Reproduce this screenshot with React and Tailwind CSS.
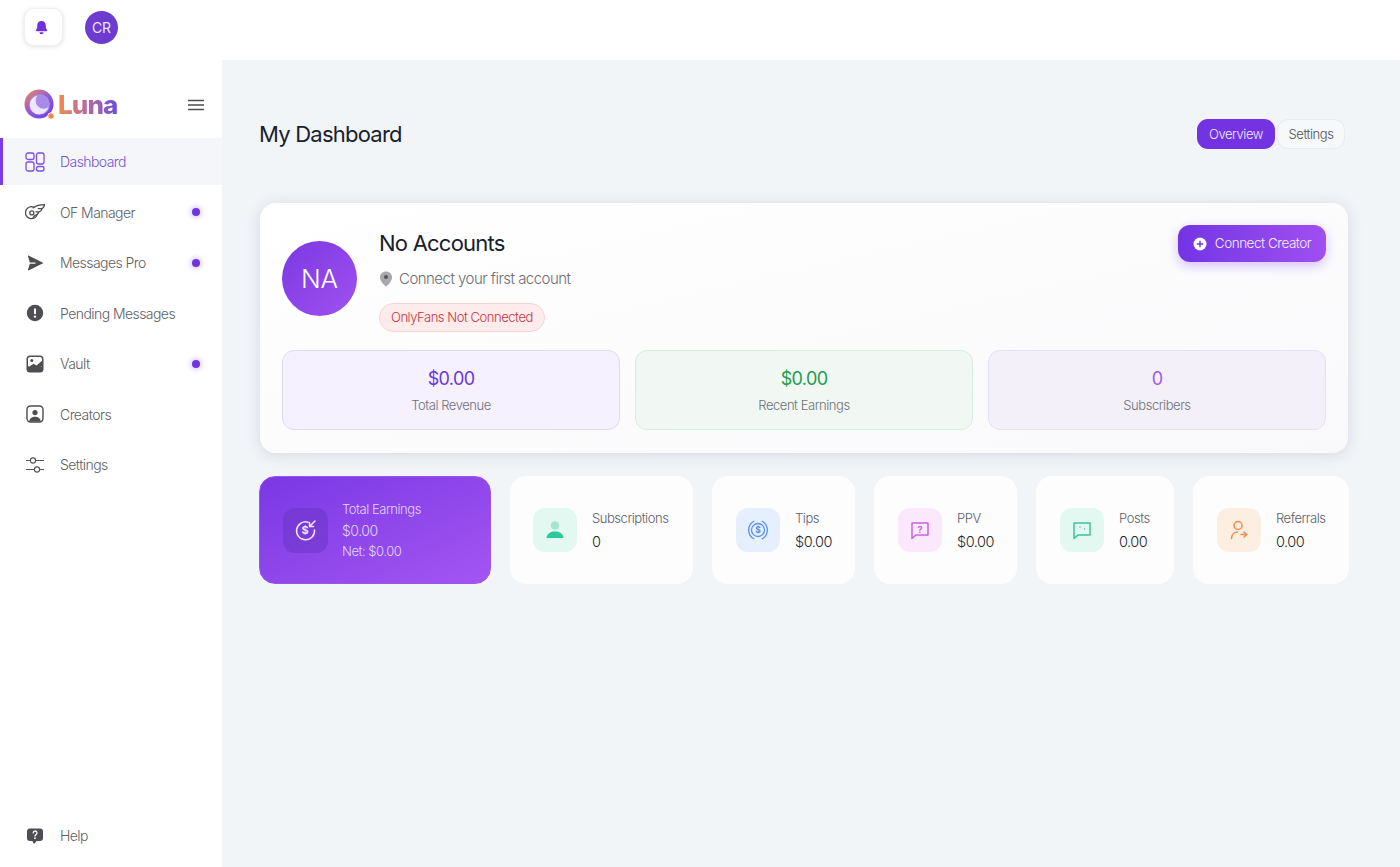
import React from 'react';

const Logo = () => (
  <svg width="32" height="32" viewBox="0 0 32 32" className="shrink-0">
    <defs>
      <linearGradient id="logoRing" x1="0" y1="0" x2="0.8" y2="1">
        <stop offset="0" stopColor="#f4914a" />
        <stop offset="0.5" stopColor="#9a5cd0" />
        <stop offset="1" stopColor="#6a3fe6" />
      </linearGradient>
    </defs>
    <circle cx="15" cy="15" r="14.5" fill="url(#logoRing)" />
    <circle cx="15.5" cy="15.500" r="10.5" fill="#a88ae8" />
    <path d="M13.500 6.500a9.500 9.500 0 1 0 11 11.500a8 8 0 0 1-11-11.500z" fill="#ece7fc" />
    <circle cx="27" cy="27" r="3.2" fill="#f0894a" stroke="#fff" strokeWidth="0.8" />
  </svg>
);

const DashboardIcon = () => (
  <svg width="20" height="20" viewBox="0 0 20 20" fill="none" stroke="#7c4fdc" strokeWidth="1.3">
    <rect x="1" y="1" width="8" height="6.5" rx="2" />
    <rect x="1" y="10" width="8" height="9" rx="2" />
    <rect x="11.5" y="1" width="7.5" height="11" rx="2" />
    <rect x="11.5" y="14.5" width="7.5" height="4.5" rx="2" />
  </svg>
);

const WingIcon = () => (
  <svg width="22" height="20" viewBox="0 0 22 20" fill="none" stroke="#4d4d52" strokeWidth="1.4" strokeLinecap="round" strokeLinejoin="round">
    <path d="M9.500 4.600a6.600 6.600 0 1 0 4 8" />
    <circle cx="7.500" cy="11" r="2.200" />
    <path d="M9 5.500C12 3.200 17 2 21.500 2c-.3 1.900-1.300 3.500-3 4.200H14.500M18.800 6.200c-.5 2-1.700 3.300-3.600 3.600h-3.200M15.400 9.800c-.8 2.200-2.300 3.500-4.400 3.800l-2.300 2.800" />
  </svg>
);

const SendIcon = () => (
  <svg width="20" height="20" viewBox="0 0 20 20" fill="#4d4d52">
    <path d="M3.500 2.500 L18.500 10 L3.500 17.500 Q2.800 17.700 3 16.800 L4.800 10.700 H10.500 V9.600 H4.800 L3 3.200 Q2.800 2.300 3.500 2.500 Z" />
  </svg>
);

const AlertIcon = () => (
  <svg width="20" height="20" viewBox="0 0 20 20">
    <circle cx="10" cy="10" r="8.200" fill="#4d4d52" />
    <rect x="9" y="5.200" width="2" height="6" rx="1" fill="#fff" />
    <circle cx="10" cy="13.600" r="1.200" fill="#fff" />
  </svg>
);

const VaultIcon = () => (
  <svg width="20" height="20" viewBox="0 0 20 20">
    <rect x="1.500" y="1.500" width="17" height="17" rx="3.500" fill="#4d4d52" />
    <rect x="3" y="3" width="14" height="10" rx="2" fill="#fff" />
    <path d="M3 13.500 L8.500 9.800 L11.500 11.500 L17 6.800 V12 L11 15.500 H3 Z" fill="#4d4d52" />
    <circle cx="6.800" cy="6.600" r="1.500" fill="#4d4d52" />
  </svg>
);

const CreatorsIcon = () => (
  <svg width="20" height="20" viewBox="0 0 20 20" fill="none">
    <rect x="2" y="2" width="16" height="16" rx="3.500" stroke="#4d4d52" strokeWidth="1.400" />
    <circle cx="10" cy="8.600" r="2.600" fill="#4d4d52" />
    <path d="M4.200 17.500 C4.800 13.800 7.400 12.800 10 12.800 C12.600 12.800 15.200 13.800 15.800 17.500 Z" fill="#4d4d52" />
  </svg>
);

const SlidersIcon = () => (
  <svg width="20" height="20" viewBox="0 0 20 20" fill="none" stroke="#55555a" strokeWidth="1.100">
    <circle cx="8" cy="5.500" r="2.600" />
    <circle cx="12" cy="14.500" r="2.600" />
    <path d="M1 5.500h4.400M10.600 5.500H19M1 14.500h8.400M14.600 14.500H19" />
  </svg>
);

const HelpIcon = () => (
  <svg width="20" height="20" viewBox="0 0 20 20">
    <path d="M5 2.500h10a3 3 0 0 1 3 3v6.500a3 3 0 0 1-3 3h-3.400L9 18l-1.600-3H5a3 3 0 0 1-3-3V5.500a3 3 0 0 1 3-3z" fill="#4d4d52" />
    <path d="M8.200 6.900a1.900 1.900 0 1 1 2.800 1.700c-.7.400-1 .8-1 1.500" fill="none" stroke="#fff" strokeWidth="1.300" strokeLinecap="round" />
    <circle cx="10" cy="12.200" r=".9" fill="#fff" />
  </svg>
);

const navItems = [
  { label: 'OF Manager', icon: WingIcon, dot: true },
  { label: 'Messages Pro', icon: SendIcon, dot: true },
  { label: 'Pending Messages', icon: AlertIcon },
  { label: 'Vault', icon: VaultIcon, dot: true },
  { label: 'Creators', icon: CreatorsIcon },
  { label: 'Settings', icon: SlidersIcon },
];

const NavRow = ({ item }) => {
  const Icon = item.icon;
  return (
    <div className="mb-[3.500px] flex h-[47px] items-center pl-[25px] pr-[22px]">
      <span className="flex w-[20px] justify-center"><Icon /></span>
      <span className="ml-[15px] text-[14px] font-light tracking-[-0.04em] text-[#5f6066]">{item.label}</span>
      {item.dot && <span className="ml-auto h-[8px] w-[8px] rounded-full bg-[#6d35e0] shadow-[0_0_5px_2px_rgba(124,58,237,0.25)]" />}
    </div>
  );
};

const SummaryBox = ({ value, label, valueClass, boxClass }) => (
  <div className={`flex h-[80px] flex-1 flex-col items-center justify-center rounded-[12px] border ${boxClass}`}>
    <div className={`text-[18px] leading-[24px] tracking-[-0.035em] ${valueClass}`}>{value}</div>
    <div className="mt-[5px] text-[13px] leading-[18px] font-light tracking-[-0.035em] text-[#6f7079]">{label}</div>
  </div>
);

const SubsIcon = () => (
  <svg width="24" height="24" viewBox="0 0 24 24">
    <circle cx="12" cy="7.500" r="4.200" fill="#a3e5cf" />
    <path d="M3.500 20 C4 15 8 13.500 12 13.500 C16 13.500 20 15 20.500 20 Z" fill="#2cc79a" />
  </svg>
);

const TipsIcon = () => (
  <svg width="24" height="24" viewBox="0 0 24 24" fill="none" stroke="#5b8fe6" strokeWidth="1.300">
    <path d="M8.300 3A10 10 0 0 0 8.300 21M15.700 3A10 10 0 0 1 15.700 21" />
    <circle cx="12" cy="12" r="6.500" />
    <text x="12" y="15" textAnchor="middle" fontSize="8.500" fontWeight="700" fill="#5b8fe6" stroke="none" fontFamily="Inter, sans-serif">$</text>
  </svg>
);

const PpvIcon = () => (
  <svg width="24" height="24" viewBox="0 0 24 24" fill="none" stroke="#c264dc" strokeWidth="1.500" strokeLinejoin="round">
    <path d="M4 5h16v12H8l-4 3.500z" />
    <text x="12" y="14.500" textAnchor="middle" fontSize="9" fontWeight="700" fill="#c264dc" stroke="none" fontFamily="Inter, sans-serif">?</text>
  </svg>
);

const PostsIcon = () => (
  <svg width="24" height="24" viewBox="0 0 24 24" fill="none" stroke="#3cc39c" strokeWidth="1.500" strokeLinejoin="round">
    <path d="M4 5h16v12H8l-4 3.500z" />
    <circle cx="10" cy="9" r=".7" fill="#3cc39c" stroke="none" />
    <circle cx="14.500" cy="11" r=".7" fill="#3cc39c" stroke="none" />
  </svg>
);

const ReferralIcon = () => (
  <svg width="24" height="24" viewBox="0 0 24 24" fill="none" stroke="#f08c4b" strokeWidth="1.500" strokeLinecap="round">
    <circle cx="11" cy="7.500" r="4" />
    <path d="M4.500 20.500c.2-4 2.800-6.500 6-6.500" />
    <path d="M14 16.500h5.500M17 14l2.700 2.500L17 19" />
  </svg>
);

const EarningsIcon = () => (
  <svg width="24" height="24" viewBox="0 0 24 24" fill="none" stroke="#f0e6ff" strokeWidth="1.500" strokeLinecap="round" strokeLinejoin="round">
    <path d="M14 4.200A9 9 0 1 0 20.500 12" />
    <path d="M21 3l-5.500 5.500M15.500 4.500v4h4" />
    <text x="11" y="16.300" textAnchor="middle" fontSize="11" fontWeight="700" fill="#f0e6ff" stroke="none" fontFamily="Inter, sans-serif">$</text>
  </svg>
);

const statCards = [
  { label: 'Subscriptions', value: '0', icon: SubsIcon, tint: 'bg-[#e2f8f1]', width: 'w-[183px]', pad: 'pl-[23px]' },
  { label: 'Tips', value: '$0.00', icon: TipsIcon, tint: 'bg-[#e5effd]', width: 'w-[143px]', pad: 'pl-[24px]' },
  { label: 'PPV', value: '$0.00', icon: PpvIcon, tint: 'bg-[#fce8fd]', width: 'w-[143px]', pad: 'pl-[24px]' },
  { label: 'Posts', value: '0.00', icon: PostsIcon, tint: 'bg-[#e2f8f1]', width: 'w-[137.500px]', pad: 'pl-[24px]' },
  { label: 'Referrals', value: '0.00', icon: ReferralIcon, tint: 'bg-[#fdeee2]', width: 'w-[156.500px]', pad: 'pl-[24.500px]' },
];

export default function App() {
  return (
    <div className="flex h-screen flex-col overflow-hidden bg-white font-[Inter,sans-serif]">
      <header className="flex h-[60px] shrink-0 items-start bg-white pl-[24px] pt-[8px]">
        <div className="flex h-[38px] w-[39px] items-center justify-center rounded-[10px] border border-[#f0eff3] bg-white pr-[5px] shadow-[0_1px_5px_rgba(0,0,0,0.12)]">
          <svg width="13" height="15" viewBox="0 0 14 15" fill="#6d2fe0">
            <path d="M7 .5c2.900 0 4.600 2 4.600 4.800v2.500l1.400 2.700c.2.500 0 1-.6 1H1.600c-.6 0-.8-.5-.6-1l1.400-2.700V5.300C2.400 2.500 4.100.5 7 .5z" />
            <path d="M4.800 12.500h4.400a2.200 2.200 0 0 1-4.400 0z" />
          </svg>
        </div>
        <div className="ml-[22px] mt-[3px] flex h-[33px] w-[33px] items-center justify-center rounded-full bg-[#6d3bd0] text-[14px] text-[#ede6fb]">CR</div>
      </header>

      <div className="flex min-h-0 flex-1">
        <aside className="flex w-[222px] shrink-0 flex-col bg-white">
          <div className="flex h-[78px] items-center pl-[24px] pr-[17px] pt-[12px]">
            <Logo />
            <span className="ml-[2px] bg-linear-to-r from-[#f18a45] via-[#b866a0] to-[#6a4ed8] bg-clip-text text-[26px] leading-[32px] font-extrabold tracking-[-0.035em] text-transparent">Luna</span>
            <svg width="18" height="12" viewBox="0 0 18 12" className="ml-auto" fill="none" stroke="#4d4d52" strokeWidth="1.300">
              <path d="M1 1.500h16M1 6h16M1 10.500h16" />
            </svg>
          </div>
          <div className="mb-[3.500px] flex h-[47px] items-center border-l-[3px] border-[#7c3aed] bg-[#f5f6fa] pl-[22px]">
            <span className="flex w-[20px] justify-center"><DashboardIcon /></span>
            <span className="ml-[15px] text-[14px] font-light tracking-[-0.04em] text-[#7a52d6]">Dashboard</span>
          </div>
          {navItems.map((item) => (
            <NavRow key={item.label} item={item} />
          ))}
          <div className="mt-auto mb-[8px] flex h-[47px] items-center pl-[25px]">
            <span className="flex w-[20px] justify-center"><HelpIcon /></span>
            <span className="ml-[15px] text-[14px] font-light tracking-[-0.04em] text-[#5f6066]">Help</span>
          </div>
        </aside>

        <main className="flex-1 bg-[#f1f5f8] pl-[37px] pr-[51px]">
          <div className="flex h-[143px] items-start justify-between pt-[59px]">
            <h1 className="text-[22px] leading-[30px] font-normal tracking-[-0.035em] text-[#18202c]">My Dashboard</h1>
            <div className="flex items-start gap-[2px] pr-[4px]">
              <button className="flex h-[30px] w-[78px] items-center justify-center rounded-[11px] bg-[#7333e2] pt-px text-[13px] font-light tracking-[-0.035em] text-[#f2ecff]">Overview</button>
              <button className="flex h-[30px] w-[68px] items-center justify-center rounded-[11px] border border-[#e9ebef] bg-[#f6f8fa] pt-px text-[13px] font-light tracking-[-0.035em] text-[#4f5157]">Settings</button>
            </div>
          </div>

          <section className="mx-[1px] rounded-[16px] bg-linear-to-br from-white to-[#f9f9fb] px-[22px] pt-[22px] pb-[23px] shadow-[0_2px_16px_rgba(30,40,70,0.13)]">
            <div className="flex items-start justify-between">
              <div className="flex items-center gap-[22px]">
                <div className="flex h-[75px] w-[75px] items-center justify-center rounded-full bg-linear-to-br from-[#7a38e2] to-[#a250f0] text-[26px] font-light text-white">NA</div>
                <div className="flex flex-col items-start">
                  <div className="text-[22px] leading-[36px] font-normal tracking-[-0.035em] text-[#18202c]">No Accounts</div>
                  <div className="mt-[6px] flex items-center gap-[6px] text-[15px] leading-[24px] font-light tracking-[-0.035em] text-[#6d6e75]">
                    <svg width="14" height="16" viewBox="0 0 14 16">
                      <path d="M7 .5c3.400 0 6 2.400 6 5.700 0 3.700-3.400 7.300-6 9.300-2.600-2-6-5.600-6-9.300C1 2.900 3.600.5 7 .5z" fill="#a9a9ad" />
                      <circle cx="7" cy="6" r="2" fill="#55555a" />
                    </svg>
                    Connect your first account
                  </div>
                  <div className="mt-[12px] flex h-[29px] items-center rounded-full border border-[#f7d2d2] bg-[#fdeceb] px-[11px] text-[13px] font-light tracking-[-0.035em] text-[#c8363f]">OnlyFans Not Connected</div>
                </div>
              </div>
              <button className="flex h-[37px] w-[148px] items-center justify-center gap-[8px] rounded-[12px] bg-linear-to-r from-[#7434e4] to-[#a04ff0] text-[13.500px] font-light tracking-[-0.035em] text-[#f6f0ff] shadow-[0_4px_12px_rgba(124,58,237,0.3)]">
                <svg width="14" height="14" viewBox="0 0 14 14">
                  <circle cx="7" cy="7" r="6.500" fill="#fff" />
                  <path d="M7 3.800v6.400M3.800 7h6.400" stroke="#7434e4" strokeWidth="1.400" />
                </svg>
                Connect Creator
              </button>
            </div>
            <div className="mt-[18px] flex gap-[15px]">
              <SummaryBox value="$0.00" label="Total Revenue" valueClass="text-[#6d35d8]" boxClass="border-[#e1daf3] bg-[#f6f1fe]" />
              <SummaryBox value="$0.00" label="Recent Earnings" valueClass="text-[#1f9d4e]" boxClass="border-[#d6ecdd] bg-[#f1f8f3]" />
              <SummaryBox value="0" label="Subscribers" valueClass="text-[#a35ae8]" boxClass="border-[#e5e0f2] bg-[#f3f0fa]" />
            </div>
          </section>

          <div className="mt-[23px] flex gap-[19px]">
            <div className="flex h-[108px] w-[232px] items-center rounded-[16px] border border-[#9a55ea] bg-linear-to-br from-[#7a37e4] to-[#a455f2] pl-[23px]">
              <div className="flex h-[45px] w-[45px] items-center justify-center rounded-[12px] bg-[#6a34c4]/50"><EarningsIcon /></div>
              <div className="ml-[14px] text-[#e4d6fb]">
                <div className="text-[13px] leading-[20px] font-light tracking-[-0.035em]">Total Earnings</div>
                <div className="mt-[1px] text-[14px] leading-[21px] font-light tracking-[-0.035em]">$0.00</div>
                <div className="text-[13px] leading-[21px] font-light tracking-[-0.035em]">Net: $0.00</div>
              </div>
            </div>
            {statCards.map((card) => {
              const Icon = card.icon;
              return (
                <div key={card.label} className={`flex h-[108px] items-center rounded-[16px] bg-[#fdfdfe] ${card.width} ${card.pad}`}>
                  <div className={`flex h-[44px] w-[44px] shrink-0 items-center justify-center rounded-[12px] ${card.tint}`}><Icon /></div>
                  <div className="ml-[15px]">
                    <div className="text-[13px] leading-[20px] font-light tracking-[-0.035em] text-[#5f6066]">{card.label}</div>
                    <div className="mt-[3px] text-[14.500px] leading-[21px] font-light tracking-[-0.035em] text-[#25272c]">{card.value}</div>
                  </div>
                </div>
              );
            })}
          </div>
        </main>
      </div>
    </div>
  );
}
